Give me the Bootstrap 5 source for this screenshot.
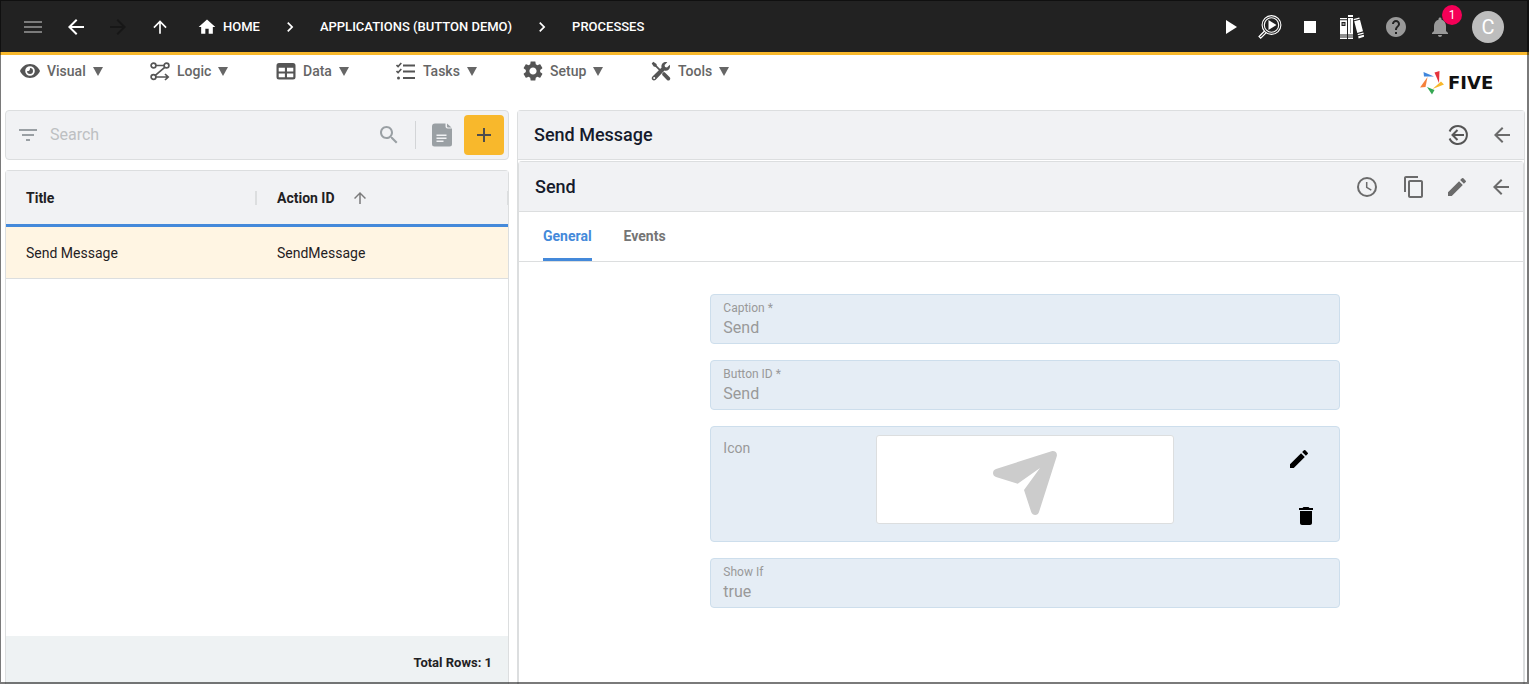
<!DOCTYPE html>
<html lang="en">
<head>
<meta charset="utf-8">
<meta name="viewport" content="width=device-width, initial-scale=1">
<title>Five - Processes</title>
<link href="https://cdn.jsdelivr.net/npm/bootstrap@5.3.0/dist/css/bootstrap.min.css" rel="stylesheet">
<style>
  :root {
    --bs-body-font-family: Roboto, "Liberation Sans", sans-serif;
    --ink: #1f2123;
    --soft: #6b6b6b;
    --line: #dcdedf;
    --panel: #f1f2f4;
    --gold: #f8b82c;
    --blue: #4489da;
  }
  body { font-size: 14px; line-height: 20px; color: var(--ink); }
  svg { display: block; flex: none; }
  svg:not([fill]) { fill: currentColor; }

  .window-frame::after {
    content: ""; position: absolute; inset: 0; pointer-events: none;
    border: solid rgba(0, 0, 0, .52); border-width: 1px 2px 2px 1px;
  }

  .top-bar { background: #222; border-bottom: 3px solid var(--gold); height: 55px; padding: 2px 25px 0 11px; color: #fff; }
  .icon-btn {
    display: flex; align-items: center; justify-content: center;
    width: 44px; height: 44px; padding: 0; border: 0; background: none; color: inherit;
  }
  .slot-42 { width: 42px; }
  .slot-40 { width: 40px; }
  .dimmed { color: #7b7b7b; }
  .faint { color: #171717; }
  .muted { color: #999; }
  .crumbs { font-size: 13px; font-weight: 500; }
  .crumbs a { color: #fff; text-decoration: none; }
  .crumbs svg { margin: 0 20px; }
  .crumbs a svg { margin: 0 6px 0 0; }
  .alert-count {
    position: absolute; top: 0; right: 0; width: 20px; height: 20px;
    border-radius: 10px; background: #f50057; color: #fff; font-size: 12px;
  }
  .avatar-btn { width: 32px; height: 32px; border: 0; border-radius: 16px; background: #bdbdbd; color: #fff; font-size: 20px; margin-left: 10px; padding: 0; }

  .menu-row { height: 55px; padding: 6px 20px 0 20px; }
  .menu-grid { display: grid; grid-template-columns: 130px 126px 120px 127px 128px auto; }
  .menu-grid button {
    display: flex; align-items: center; border: 0; background: none; padding: 0;
    color: #666; font-weight: 500; white-space: nowrap; text-align: left;
  }
  .menu-grid svg { color: #555; margin-right: 7px; }
  .menu-grid .dropdown-toggle::after {
    margin-left: 7px; border-top: 9px solid #666; border-left: 5px solid transparent; border-right: 5px solid transparent;
  }
  .brand-mark { font: bold 18px/20px "DejaVu Sans", sans-serif; color: #111; padding-top: 10px; width: 89px; }

  .work-area { display: grid; grid-template-columns: minmax(0, 1fr) minmax(0, 2fr); gap: 8px; padding: 0 4px 0 5px; }
  .boxed { border: 1px solid var(--line); border-radius: 4px; }
  .search-bar { background: var(--panel); height: 50px; padding: 0 4px 0 10px; color: #9aa0a4; }
  .search-bar input { border: 0; background: none; outline: 0; font-size: 16px; line-height: 24px; padding: 0; margin-left: 10px; }
  .search-bar input::placeholder { color: #bdc0c2; }
  .rule-v { width: 1px; height: 28px; background: #d3d5d7; margin-left: 14px; }
  .add-btn { width: 40px; height: 40px; border-radius: 4px; background: var(--gold); color: #4d4d4d; }

  .list-box { border-bottom: 0; border-radius: 4px 4px 0 0; margin-top: 10px; }
  .list-table { margin: 0; table-layout: fixed; width: 100%; border-collapse: separate; border-spacing: 0; }
  .list-table th { background: var(--panel); height: 56px; padding: 0 0 0 20px; border-bottom: 3px solid var(--blue); font-weight: 700; }
  .list-table th > div { border-right: 2px solid var(--line); height: 14px; }
  .list-table th:last-child > div { border-right-width: 1px; }
  .list-table td { background: #fff5e3; height: 52px; padding: 0 0 0 20px; border-bottom: 1px solid var(--line); }
  .list-foot { background: #eef2f3; height: 48px; padding: 17px 16px 0; font-size: 13px; font-weight: 700; text-align: right; }

  .outer-panel, .inner-panel { border: 1px solid var(--line); border-bottom: 0; border-radius: 4px 4px 0 0; }
  .inner-panel { margin-top: 1px; }
  .panel-head { background: var(--panel); border-bottom: 1px solid var(--line); height: 49px; padding-left: 16px; color: var(--soft); }
  .inner-panel .panel-head { height: 50px; }
  .panel-head h1, .panel-head h2 { font-size: 18px; line-height: 24px; font-weight: 500; color: #161b2c; margin: 0 auto 0 0; }
  .tab-row { height: 50px; padding-left: 24px; gap: 32px; border-bottom: 1px solid var(--line); }
  .tab-row button { border: 0; background: none; padding: 2px 0 1px; font-weight: 700; color: #757575; border-bottom: 3px solid transparent; }
  .tab-row button.active { color: var(--blue); border-bottom-color: var(--blue); }

  .form-area { padding: 32px 14px 0 22px; color: #999; }
  .form-stack { gap: 16px; }
  .field-box { background: #e5edf5; border: 1px solid #cddeec; border-radius: 4px; height: 50px; padding: 5px 12px 0; }
  .field-box label { display: block; font-size: 12px; line-height: 16px; }
  .field-box input { display: block; width: 100%; border: 0; background: none; padding: 0; font-size: 16px; line-height: 24px; height: 24px; color: #999; }
  .icon-field { display: grid; grid-template-columns: 1fr minmax(0, 298px) 1fr; height: 116px; padding: 8px 0; }
  .icon-field .preview { background: #fff; border: 1px solid var(--line); border-radius: 3px; height: 89px; padding-top: 6px; color: #ccc; }
  .icon-caption { padding: 3px 0 0 12px; }
  .icon-tools { color: #000; padding-right: 16px; }
  .icon-tools .edit { width: 48px; height: 48px; }
  .icon-tools .remove { width: 34px; height: 34px; }
</style>
</head>
<body>
<div class="window-frame position-relative vh-100 d-flex flex-column overflow-hidden">

  <header class="top-bar d-flex align-items-center flex-shrink-0">
    <button class="icon-btn dimmed" aria-label="Menu"><svg width="24" height="24" viewBox="0 0 24 24"><path d="M3 18h18v-2H3zm0-5h18v-2H3zm0-7v2h18V6z"/></svg></button>
    <button class="icon-btn slot-42" aria-label="Back"><svg width="24" height="24" viewBox="0 0 24 24"><path d="M20 11H7.83l5.59-5.59L12 4l-8 8 8 8 1.41-1.41L7.83 13H20z"/></svg></button>
    <button class="icon-btn slot-42 faint" aria-label="Forward"><svg width="24" height="24" viewBox="0 0 24 24"><path d="m12 4-1.41 1.41L16.17 11H4v2h12.17l-5.58 5.59L12 20l8-8z"/></svg></button>
    <button class="icon-btn slot-42" aria-label="Up"><svg width="20" height="20" viewBox="0 0 24 24"><path d="m4 12 1.41 1.41L11 7.83V20h2V7.83l5.58 5.59L20 12l-8-8z"/></svg></button>
    <nav class="crumbs d-flex align-items-center ps-3 me-auto text-nowrap" aria-label="Breadcrumb">
      <a href="#" class="d-flex align-items-center"><svg width="20" height="20" viewBox="0 0 24 24"><path d="M10 20v-6h4v6h5v-8h3L12 3 2 12h3v8z"/></svg>HOME</a>
      <svg width="20" height="20" viewBox="0 0 24 24"><path d="M10 6 8.59 7.41 13.17 12l-4.58 4.59L10 18l6-6z"/></svg>
      <a href="#">APPLICATIONS (BUTTON DEMO)</a>
      <svg width="20" height="20" viewBox="0 0 24 24"><path d="M10 6 8.59 7.41 13.17 12l-4.58 4.59L10 18l6-6z"/></svg>
      <a href="#">PROCESSES</a>
    </nav>
    <button class="icon-btn slot-40" aria-label="Run"><svg width="24" height="24" viewBox="0 0 24 24"><path d="M8 5v14l11-7z"/></svg></button>
    <button class="icon-btn slot-40" aria-label="Inspect"><svg width="24" height="24" viewBox="0 0 24 24"><g fill="none" stroke="#fff"><circle cx="13.5" cy="10" r="9.400" stroke-width="1.100"/><circle cx="13.5" cy="10" r="7.200" stroke-width="1.100"/><path d="m6.600 16-5.500 5.500 1.600 1.600L8.300 17.600" stroke-width="1.300"/></g><path d="M10.500 5v10l8-5z"/></svg></button>
    <button class="icon-btn slot-40" aria-label="Stop"><svg width="24" height="24" viewBox="0 0 24 24"><path d="M6 6h12v12H6z"/></svg></button>
    <button class="icon-btn" aria-label="Library"><svg width="24" height="24" viewBox="0 0 24 24"><path d="M0 3h7v1.200H0zM0 5.200h7v14.300H0zM0 20.600h7v1H0zM0 22.600h7V24H0zM8 0h5v2H8zM8 3h5v16.500H8zM8 20.600h5v1H8zM8 22.600h5V24H8zM13.500 4l5.800-1.500.4 1.300-5.800 1.500zM14.200 6.300l5.800-1.500 3 11.500-5.700 1.600zM17.600 19l5.800-1.500.3 1.200-5.800 1.500zM18.200 21.200l5.700-1.500.1 2-5.400 1.700z"/><path fill="#222" d="M1.500 7h4v4h-4z"/><path fill="#999" d="M2.500 8h2v2h-2zM10 4h1v14h-1z"/></svg></button>
    <button class="icon-btn muted" aria-label="Help"><svg width="24" height="24" viewBox="0 0 24 24"><path d="M12 2C6.480 2 2 6.480 2 12s4.480 10 10 10 10-4.480 10-10S17.520 2 12 2zm1 17h-2v-2h2zm2.070-7.750-.9.920C13.450 12.900 13 13.500 13 15h-2v-.5c0-1.100.45-2.100 1.170-2.830l1.240-1.260c.37-.36.59-.86.59-1.410 0-1.100-.9-2-2-2s-2 .9-2 2H8c0-2.210 1.790-4 4-4s4 1.790 4 4c0 .88-.36 1.680-.93 2.250z"/></svg></button>
    <button class="icon-btn muted position-relative" aria-label="Notifications"><svg width="24" height="24" viewBox="0 0 24 24"><path d="M12 22c1.100 0 2-.9 2-2h-4c0 1.100.89 2 2 2zm6-6v-5c0-3.070-1.640-5.640-4.500-6.320V4c0-.83-.67-1.500-1.500-1.500s-1.500.67-1.500 1.500v.68C7.630 5.360 6 7.920 6 11v5l-2 2v1h16v-1z"/></svg><span class="alert-count">1</span></button>
    <button class="avatar-btn" aria-label="Account">C</button>
  </header>

  <div class="menu-row d-flex align-items-start justify-content-between flex-shrink-0">
    <nav class="menu-grid" aria-label="Main menu">
      <button class="dropdown-toggle"><svg width="20" height="20" viewBox="0 0 20 20"><path fill-rule="evenodd" d="M10 3C5.500 3 1.800 5.800 0 10c1.800 4.200 5.500 7 10 7s8.200-2.800 10-7c-1.800-4.200-5.500-7-10-7zm0 2.200a4.800 4.800 0 1 1 0 9.600 4.800 4.800 0 0 1 0-9.600z"/><path d="M10 7a3 3 0 1 1-3 3c.8.5 3.300 0 3-3z"/></svg>Visual</button>
      <button class="dropdown-toggle"><svg width="20" height="20" viewBox="0 0 20 20" fill="none" stroke="#555" stroke-width="1.700"><circle cx="3.500" cy="4.500" r="2.400"/><circle cx="16.500" cy="4.500" r="2.400"/><circle cx="3.500" cy="16" r="2.400"/><path d="M6 4.500h8M14.700 6.300 5.300 14.300M6 16h12M15 13l3.200 3-3.200 3"/></svg>Logic</button>
      <button class="dropdown-toggle"><svg width="20" height="20" viewBox="0 0 20 20"><path fill-rule="evenodd" d="M3 2h14a2.500 2.500 0 0 1 2.500 2.500v11.500a2.500 2.500 0 0 1-2.500 2.500H3A2.500 2.500 0 0 1 .5 16V4.500A2.500 2.500 0 0 1 3 2zm-.3 4.700v3.800h6.200V6.700zm8.300 0v3.800h6.300V6.700zM2.700 12.500v3.800h6.200v-3.800zm8.300 0v3.800h6.300v-3.800z"/></svg>Data</button>
      <button class="dropdown-toggle"><svg width="20" height="20" viewBox="0 0 20 20" fill="none" stroke="#555" stroke-width="2"><path d="M7 4.500h12M7 10.500h12M7 17h12"/><path stroke-width="1.600" d="m.5 4 1.600 1.600L5.300 2M.5 10l1.600 1.600L5.300 8"/><circle cx="2.500" cy="17" r="1.500" fill="#555" stroke="none"/></svg>Tasks</button>
      <button class="dropdown-toggle"><svg width="20" height="20" viewBox="2 2 20 20"><path d="M19.140 12.940c.04-.3.060-.61.060-.94 0-.32-.02-.64-.07-.94l2.030-1.580c.18-.14.23-.41.12-.61l-1.920-3.320c-.12-.22-.37-.29-.59-.22l-2.390.96c-.5-.38-1.030-.7-1.620-.94l-.36-2.540c-.04-.24-.24-.41-.48-.41h-3.840c-.24 0-.43.17-.47.41l-.36 2.540c-.59.24-1.130.57-1.620.94l-2.390-.96c-.22-.08-.47 0-.59.22L2.740 8.870c-.12.21-.08.47.12.61l2.030 1.580c-.05.3-.09.63-.09.94s.02.64.07.94l-2.030 1.580c-.18.14-.23.41-.12.61l1.920 3.320c.12.22.37.29.59.22l2.390-.96c.5.38 1.030.7 1.620.94l.36 2.540c.05.24.24.41.48.41h3.840c.24 0 .44-.17.47-.41l.36-2.540c.59-.24 1.130-.56 1.620-.94l2.390.96c.22.08.47 0 .59-.22l1.920-3.320c.12-.22.07-.47-.12-.61zM12 15.600c-1.980 0-3.600-1.620-3.600-3.600s1.620-3.600 3.600-3.600 3.600 1.620 3.600 3.600-1.620 3.600-3.600 3.600z"/></svg>Setup</button>
      <button class="dropdown-toggle"><svg width="20" height="20" viewBox="0 0 20 20"><path d="M2.300.8.700 2.400l2 3.200 1.900.5 4 4 1.300-1.300-4-4-.4-1.900zM11.200 12.500l1.500-1.500 1 .2 5 5c.8.800.8 1.900 0 2.700s-1.900.8-2.700 0l-4.800-4.800z"/><path d="M18.800 3.800 16 6.400l-2-.4-.4-2L16.300 1.200c-2-.6-4 0-5.100 1.500-.9 1.200-1 2.600-.6 3.900L1.500 15.400c-1 1-1 2.500-.1 3.400s2.400.8 3.300-.1l8.800-9.100c1.500.5 3.100.1 4.300-1.100s1.500-3.100 1-4.700zM3.200 17.900a1 1 0 1 1 0-2 1 1 0 0 1 0 2z"/></svg>Tools</button>
    </nav>
    <div class="brand-mark d-flex align-items-center gap-1">
      <svg width="24" height="24" viewBox="0 0 24 24"><path fill="#3f86dc" d="M3.500 1 14 5.500H4z"/><path fill="#e5343c" d="m14.500 1.500 5-1.500-.5 12z"/><path fill="#f8b82c" d="M24 13.500 12.500 18 21 10.500z"/><path fill="#35a853" d="m14.500 19-2.500 4.500L7 16z"/><path fill="#f5813a" d="m7.500 6-2 10-5.500.5z"/></svg>
      <span>FIVE</span>
    </div>
  </div>

  <main class="work-area flex-grow-1">
    <section class="d-flex flex-column">
      <div class="search-bar boxed d-flex align-items-center flex-shrink-0">
        <svg width="24" height="24" viewBox="0 0 24 24"><path d="M10 18h4v-2h-4zM3 6v2h18V6zm3 7h12v-2H6z"/></svg>
        <input type="search" class="flex-grow-1" placeholder="Search" aria-label="Search">
        <svg width="24" height="24" viewBox="0 0 24 24"><path d="M15.500 14h-.79l-.28-.27C15.410 12.590 16 11.110 16 9.500 16 5.910 13.090 3 9.500 3S3 5.910 3 9.500 5.910 16 9.500 16c1.610 0 3.090-.59 4.230-1.570l.27.28v.79l5 4.990L20.490 19zm-6 0C7.010 14 5 11.990 5 9.500S7.010 5 9.500 5 14 7.010 14 9.500 11.990 14 9.500 14z"/></svg>
        <div class="rule-v"></div>
        <button class="icon-btn ms-1" aria-label="Report"><svg width="20" height="24" viewBox="0 0 20 24"><path fill-rule="evenodd" d="M3 .5h10.500v3a2 2 0 0 0 2 2H20V21a2.500 2.500 0 0 1-2.500 2.500h-15A2.500 2.500 0 0 1 0 21V3.500A3 3 0 0 1 3 .5zM4.500 11.500V13h10v-1.500zm0 3V16h10v-1.500zm0 3V19h7v-1.500z"/><path d="M15 .5 19.500 4.500H16a1 1 0 0 1-1-1z"/></svg></button>
        <button class="icon-btn add-btn" aria-label="Add"><svg width="24" height="24" viewBox="0 0 24 24"><path d="M19 13h-6v6h-2v-6H5v-2h6V5h2v6h6z"/></svg></button>
      </div>

      <div class="list-box boxed d-flex flex-column flex-grow-1">
        <table class="list-table">
          <thead>
            <tr>
              <th scope="col"><div class="d-flex align-items-center">Title</div></th>
              <th scope="col"><div class="d-flex align-items-center">Action ID<svg class="ms-3 dimmed" width="18" height="18" viewBox="0 0 24 24"><path d="m4 12 1.410 1.410L11 7.830V20h2V7.830l5.580 5.590L20 12l-8-8z"/></svg></div></th>
            </tr>
          </thead>
          <tbody>
            <tr><td>Send Message</td><td>SendMessage</td></tr>
          </tbody>
        </table>
        <div class="list-foot mt-auto">Total Rows: 1</div>
      </div>
    </section>

    <section class="outer-panel d-flex flex-column">
      <div class="panel-head d-flex align-items-center flex-shrink-0">
        <h1>Send Message</h1>
        <button class="icon-btn" aria-label="Exit"><svg width="24" height="24" viewBox="0 0 24 24" fill="none" stroke="#555" stroke-width="2"><path d="M3.600 8.500a9 9 0 1 1 0 7M18 12H6.500M11.500 7 6.500 12l5 5"/></svg></button>
        <button class="icon-btn" aria-label="Back to list"><svg width="24" height="24" viewBox="0 0 24 24"><path d="M20 11H7.830l5.590-5.590L12 4l-8 8 8 8 1.410-1.410L7.830 13H20z"/></svg></button>
      </div>
      <div class="inner-panel flex-grow-1">
        <div class="panel-head d-flex align-items-center">
          <h2>Send</h2>
          <button class="icon-btn me-1" aria-label="History"><svg width="24" height="24" viewBox="0 0 24 24" fill="none" stroke="currentColor"><circle cx="12" cy="12" r="9" stroke-width="2"/><path d="M11.700 7v5.300l4.600 2.800" stroke-width="1.500"/></svg></button>
          <button class="icon-btn slot-42" aria-label="Copy"><svg width="24" height="24" viewBox="0 0 24 24"><path d="M16 1H4c-1.100 0-2 .9-2 2v14h2V3h12zm3 4H8c-1.100 0-2 .9-2 2v14c0 1.100.9 2 2 2h11c1.100 0 2-.9 2-2V7c0-1.100-.9-2-2-2zm0 16H8V7h11z"/></svg></button>
          <button class="icon-btn" aria-label="Edit"><svg width="24" height="24" viewBox="0 0 24 24"><path d="M3 17.250V21h3.750L17.810 9.940l-3.750-3.750zM20.710 7.040a.996.996 0 0 0 0-1.410l-2.340-2.340a.996.996 0 0 0-1.410 0l-1.830 1.830 3.750 3.750z"/></svg></button>
          <button class="icon-btn" aria-label="Back"><svg width="24" height="24" viewBox="0 0 24 24"><path d="M20 11H7.830l5.590-5.590L12 4l-8 8 8 8 1.410-1.410L7.830 13H20z"/></svg></button>
        </div>
        <div class="tab-row d-flex" role="tablist">
          <button class="active" role="tab" aria-selected="true">General</button>
          <button role="tab" aria-selected="false">Events</button>
        </div>
        <form class="form-area">
          <div class="row g-0 justify-content-center">
            <div class="form-stack col-8 px-2 d-flex flex-column">
              <div class="field-box"><label for="caption">Caption *</label><input id="caption" type="text" value="Send" readonly></div>
              <div class="field-box"><label for="buttonId">Button ID *</label><input id="buttonId" type="text" value="Send" readonly></div>
              <div class="field-box icon-field">
                <div class="icon-caption">Icon</div>
                <div class="preview d-flex align-items-center justify-content-center"><svg width="64" height="64" viewBox="0 0 64 64"><path d="M3 18 58.500.3C62-.6 64.800 2 63.700 5.500L46 61c-1 4-6.500 4-7.800 0L31 39l16-22-22.300 15.700L3 26c-4-1.300-4-6.700 0-8z"/></svg></div>
                <div class="icon-tools d-flex flex-column align-items-end justify-content-between">
                  <button type="button" class="icon-btn edit" aria-label="Edit icon"><svg width="24" height="24" viewBox="0 0 24 24"><path d="M3 17.250V21h3.750L17.810 9.940l-3.750-3.750zM20.710 7.040a.996.996 0 0 0 0-1.410l-2.340-2.340a.996.996 0 0 0-1.410 0l-1.830 1.830 3.750 3.750z"/></svg></button>
                  <button type="button" class="icon-btn remove" aria-label="Delete icon"><svg width="24" height="24" viewBox="0 0 24 24"><path d="M6 19c0 1.100.9 2 2 2h8c1.100 0 2-.9 2-2V7H6zM19 4h-3.500l-1-1h-5l-1 1H5v2h14z"/></svg></button>
                </div>
              </div>
              <div class="field-box"><label for="showIf">Show If</label><input id="showIf" type="text" value="true" readonly></div>
            </div>
          </div>
        </form>
      </div>
    </section>
  </main>
</div>
<script src="https://cdn.jsdelivr.net/npm/bootstrap@5.3.0/dist/js/bootstrap.bundle.min.js"></script>
</body>
</html>
